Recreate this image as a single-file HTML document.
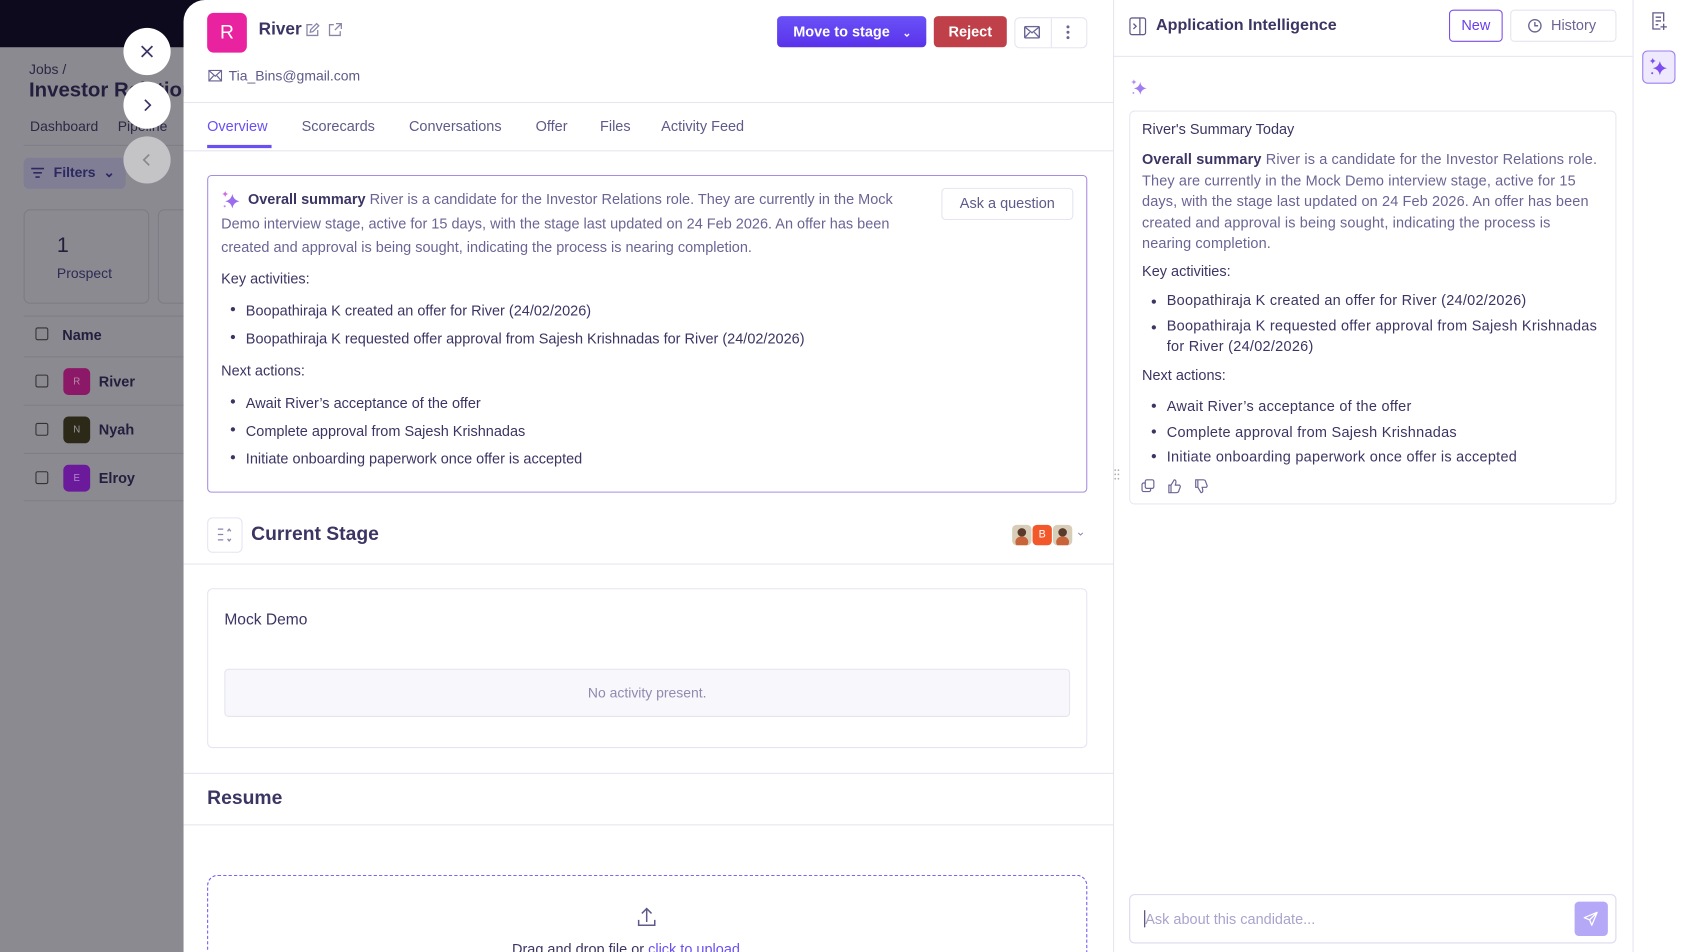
<!DOCTYPE html>
<html><head><meta charset="utf-8"><style>
*{box-sizing:border-box;margin:0;padding:0}
html,body{width:1683px;height:952px;overflow:hidden;background:#fff}
#w{position:absolute;left:0;top:0;width:1568px;height:887px;overflow:hidden;transform:scale(1.07334);transform-origin:0 0;font-family:"Liberation Sans",sans-serif;color:#3b3563}
.a{position:absolute}
.t{position:absolute;white-space:nowrap}
.hr{position:absolute;height:1px;background:#e6e4f0}
.circ{position:absolute;width:44px;height:44px;border-radius:50%;background:#fff;display:flex;align-items:center;justify-content:center}
.body{color:#6a6594;font-size:13.5px}
ul{list-style:none}
li{position:relative;padding-left:23px}
li:before{content:"";position:absolute;left:9px;top:9px;width:4px;height:4px;border-radius:50%;background:#3b3563}
.rp{letter-spacing:0.25px}
</style></head><body><div id="w">
<div class="a" style="left:0;top:0;width:200px;height:887px;background:#8b8a90"></div>
<div class="a" style="left:0;top:0;width:200px;height:44px;background:#0c0a1c"></div>
<div class="t" style="left:27px;top:57px;font-size:13px;color:#2c2845">Jobs /</div>
<div class="t" style="left:27px;top:74px;font-size:19px;font-weight:bold;color:#221e3d">Investor Relations</div>
<div class="t" style="left:28px;top:110px;font-size:13px;color:#2c2845">Dashboard &nbsp; &nbsp; Pipeline</div>
<div class="hr" style="left:22px;top:135px;width:160px;background:#7f7e86"></div>
<div class="a" style="left:22px;top:147px;width:95px;height:29px;background:#807e95;border-radius:5px"></div>
<svg class="a" style="left:29px;top:156px" width="12" height="10"><path d="M0 1H12M2 5H10M4 9H8" stroke="#2c2860" stroke-width="1.5"/></svg>
<div class="t" style="left:50px;top:153px;font-size:13px;font-weight:bold;color:#2c2860">Filters &nbsp;⌄</div>
<div class="a" style="left:22px;top:195px;width:117px;height:88px;border:1px solid #7d7c84;border-radius:6px"></div>
<div class="a" style="left:147px;top:195px;width:40px;height:88px;border:1px solid #7d7c84;border-radius:6px"></div>
<div class="t" style="left:53px;top:218px;font-size:20px;color:#221e3d">1</div>
<div class="t" style="left:53px;top:247px;font-size:13px;color:#2e2a55">Prospect</div>
<div class="hr" style="left:22px;top:294px;width:160px;background:#7f7e86"></div>
<div class="a" style="left:33px;top:305px;width:12px;height:12px;border:1.5px solid #333;border-radius:2px"></div>
<div class="t" style="left:58px;top:305px;font-size:13.5px;font-weight:bold;color:#221e3d">Name</div>
<div class="hr" style="left:22px;top:332px;width:160px;background:#7f7e86"></div>
<div class="a" style="left:33px;top:349px;width:12px;height:12px;border:1.5px solid #333;border-radius:2px"></div>
<div class="a" style="left:59px;top:343px;width:25px;height:25px;border-radius:5px;background:#8c1868;color:#b98aa8;font-size:9px;text-align:center;line-height:25px">R</div>
<div class="t" style="left:92px;top:348px;font-size:13.5px;font-weight:bold;color:#221e3d">River</div>
<div class="hr" style="left:22px;top:377px;width:160px;background:#7f7e86"></div>
<div class="a" style="left:33px;top:394px;width:12px;height:12px;border:1.5px solid #333;border-radius:2px"></div>
<div class="a" style="left:59px;top:388px;width:25px;height:25px;border-radius:5px;background:#2c2918;color:#999;font-size:9px;text-align:center;line-height:25px">N</div>
<div class="t" style="left:92px;top:393px;font-size:13.5px;font-weight:bold;color:#221e3d">Nyah</div>
<div class="hr" style="left:22px;top:422px;width:160px;background:#7f7e86"></div>
<div class="a" style="left:33px;top:439px;width:12px;height:12px;border:1.5px solid #333;border-radius:2px"></div>
<div class="a" style="left:59px;top:433px;width:25px;height:25px;border-radius:5px;background:#6a1a9a;color:#b28ad0;font-size:9px;text-align:center;line-height:25px">E</div>
<div class="t" style="left:92px;top:438px;font-size:13.5px;font-weight:bold;color:#221e3d">Elroy</div>
<div class="hr" style="left:22px;top:466px;width:160px;background:#7f7e86"></div>

<div class="circ" style="left:115px;top:26px"><svg width="14" height="14" viewBox="0 0 14 14"><path d="M2 2L12 12M12 2L2 12" stroke="#3b3563" stroke-width="1.6"/></svg></div>
<div class="circ" style="left:115px;top:76px"><svg width="14" height="14" viewBox="0 0 14 14"><path d="M5 2L10 7L5 12" stroke="#3b3563" stroke-width="1.6" fill="none"/></svg></div>
<div class="circ" style="left:115px;top:127px;background:#c4c4c6"><svg width="14" height="14" viewBox="0 0 14 14"><path d="M9 2L4 7L9 12" stroke="#888" stroke-width="1.6" fill="none"/></svg></div>

<div class="a" style="left:171px;top:0;width:1397px;height:887px;background:#fff;border-top-left-radius:20px"></div>
<div class="a" style="left:193px;top:12px;width:37px;height:37px;border-radius:6px;background:#e9239f;color:#fff;font-size:18px;text-align:center;line-height:37px">R</div>
<div class="t" style="left:241px;top:19px;font-size:16px;font-weight:bold;color:#3b3563">River</div>
<svg class="a" style="left:284px;top:21px" width="14" height="14" viewBox="0 0 14 14"><path d="M7 2H2V12H12V7M5 9L5.5 6.5L11 1L13 3L7.5 8.5Z" stroke="#8a86aa" stroke-width="1.2" fill="none"/></svg>
<svg class="a" style="left:305px;top:21px" width="14" height="14" viewBox="0 0 14 14"><path d="M6 2H2V12H12V8M8 1H13V6M13 1L7 7" stroke="#8a86aa" stroke-width="1.2" fill="none"/></svg>
<svg class="a" style="left:194px;top:65px" width="13" height="11" viewBox="0 0 13 11"><rect x="0.6" y="0.6" width="11.8" height="9.8" stroke="#6a6594" fill="none" stroke-width="1.1"/><path d="M0.6 0.6L6.5 6L12.4 0.6M0.6 10.4L5 5.5M12.4 10.4L8 5.5" stroke="#6a6594" fill="none" stroke-width="1.1"/></svg>
<div class="t" style="left:213px;top:63px;font-size:13px;color:#5e5a8a">Tia_Bins@gmail.com</div>
<div class="a" style="left:724px;top:15px;width:139px;height:29px;border-radius:4px;background:linear-gradient(#6a52f7,#5a32ea);color:#fff;font-size:13.5px;font-weight:bold;line-height:29px;padding-left:15px">Move to stage <span style="font-size:10px;margin-left:8px">⌄</span></div>
<div class="a" style="left:870px;top:15px;width:68px;height:29px;border-radius:4px;background:#c0404a;color:#fff;font-size:13.5px;font-weight:bold;line-height:29px;text-align:center">Reject</div>
<div class="a" style="left:945px;top:16px;width:68px;height:29px;border:1px solid #e6e4f0;border-radius:5px"></div>
<div class="a" style="left:979px;top:17px;width:1px;height:27px;background:#e6e4f0"></div>
<svg class="a" style="left:954px;top:24px" width="15" height="12" viewBox="0 0 15 12"><rect x="0.7" y="0.7" width="13.6" height="10.6" rx="1" stroke="#6a6594" fill="none" stroke-width="1.3"/><path d="M0.7 1L7.5 6.5L14.3 1M0.7 11L5.5 6M14.3 11L9.5 6" stroke="#6a6594" fill="none" stroke-width="1.2"/></svg>
<svg class="a" style="left:993px;top:23px" width="4" height="14"><circle cx="2" cy="2" r="1.4" fill="#6a6594"/><circle cx="2" cy="7" r="1.4" fill="#6a6594"/><circle cx="2" cy="12" r="1.4" fill="#6a6594"/></svg>
<div class="hr" style="left:171px;top:95px;width:866px"></div>
<div class="t" style="left:193px;top:110px;font-size:13.5px;color:#6a4ff2">Overview</div>
<div class="a" style="left:193px;top:135px;width:60px;height:3px;background:#6a4ff2"></div>
<div class="t" style="left:281px;top:110px;font-size:13.5px;color:#5e5a8a">Scorecards</div>
<div class="t" style="left:381px;top:110px;font-size:13.5px;color:#5e5a8a">Conversations</div>
<div class="t" style="left:499px;top:110px;font-size:13.5px;color:#5e5a8a">Offer</div>
<div class="t" style="left:559px;top:110px;font-size:13.5px;color:#5e5a8a">Files</div>
<div class="t" style="left:616px;top:110px;font-size:13.5px;color:#5e5a8a">Activity Feed</div>
<div class="hr" style="left:171px;top:140px;width:866px"></div>

<div class="a" style="left:193px;top:163px;width:820px;height:296px;border:1px solid #a78de0;border-radius:4px"></div>
<svg class="a" style="left:206px;top:177px" width="19" height="19" viewBox="0 0 20 20"><path d="M11 4Q12 10 18 11Q12 12 11 18Q10 12 4 11Q10 10 11 4Z" fill="#9a6cf0"/><path d="M4 1Q4.5 3.5 7 4Q4.5 4.5 4 7Q3.5 4.5 1 4Q3.5 3.5 4 1Z" fill="#d16be0"/><circle cx="3.5" cy="16" r="1" fill="#b58ef0"/></svg>
<div class="a body" style="left:206px;top:175px;width:650px;line-height:22.5px"><span style="display:inline-block;width:25px"></span><b style="color:#3b3563">Overall summary</b> River is a candidate for the Investor Relations role. They are currently in the Mock Demo interview stage, active for 15 days, with the stage last updated on 24 Feb 2026. An offer has been created and approval is being sought, indicating the process is nearing completion.</div>
<div class="a" style="left:877px;top:175px;width:123px;height:30px;border:1px solid #e6e4f0;border-radius:4px;font-size:13.5px;color:#5e5a8a;text-align:center;line-height:28px">Ask a question</div>
<div class="t" style="left:206px;top:252px;font-size:13.5px;color:#3b3563">Key activities:</div>
<ul class="a" style="left:206px;top:277px;font-size:13.5px;color:#3b3563;line-height:26px">
<li>Boopathiraja K created an offer for River (24/02/2026)</li>
<li>Boopathiraja K requested offer approval from Sajesh Krishnadas for River (24/02/2026)</li></ul>
<div class="t" style="left:206px;top:338px;font-size:13.5px;color:#3b3563">Next actions:</div>
<ul class="a" style="left:206px;top:363px;font-size:13.5px;color:#3b3563;line-height:26px">
<li>Await River’s acceptance of the offer</li>
<li>Complete approval from Sajesh Krishnadas</li>
<li>Initiate onboarding paperwork once offer is accepted</li></ul>

<div class="a" style="left:193px;top:482px;width:33px;height:33px;border:1px solid #e6e4f0;border-radius:5px"></div>
<svg class="a" style="left:202px;top:491px" width="15" height="15" viewBox="0 0 15 15"><path d="M1 2H6M1 7H6M1 12H6M10 4L11.5 2L13 4M10 11L11.5 13L13 11" stroke="#8a86aa" stroke-width="1.2" fill="none"/></svg>
<div class="t" style="left:234px;top:487px;font-size:18px;font-weight:bold;color:#3b3563">Current Stage</div>
<div class="a" style="left:943px;top:489px;width:18px;height:19px;border-radius:4px;background:#d8cdb8;overflow:hidden"><div class="a" style="left:5px;top:3px;width:8px;height:8px;border-radius:50%;background:#5a3a2a"></div><div class="a" style="left:3px;top:11px;width:12px;height:10px;border-radius:5px;background:#c8633a"></div></div>
<div class="a" style="left:962px;top:489px;width:18px;height:19px;border-radius:4px;background:#f2582a;color:#fff;font-size:10px;text-align:center;line-height:19px">B</div>
<div class="a" style="left:981px;top:489px;width:18px;height:19px;border-radius:4px;background:#d8cdb8;overflow:hidden"><div class="a" style="left:5px;top:3px;width:8px;height:8px;border-radius:50%;background:#5a3a2a"></div><div class="a" style="left:3px;top:11px;width:12px;height:10px;border-radius:5px;background:#c8633a"></div></div>
<div class="t" style="left:1002px;top:489px;font-size:11px;color:#8a86aa">⌄</div>
<div class="hr" style="left:171px;top:525px;width:866px"></div>
<div class="a" style="left:193px;top:548px;width:820px;height:149px;border:1px solid #e6e4f0;border-radius:5px"></div>
<div class="t" style="left:209px;top:570px;font-size:14.5px;color:#3b3563">Mock Demo</div>
<div class="a" style="left:209px;top:623px;width:788px;height:45px;border:1px solid #e6e4f0;border-radius:4px;background:#f7f7fc;font-size:13px;color:#8f8bb0;text-align:center;line-height:43px">No activity present.</div>
<div class="hr" style="left:171px;top:720px;width:866px"></div>
<div class="t" style="left:193px;top:733px;font-size:18px;font-weight:bold;color:#3b3563">Resume</div>
<div class="hr" style="left:171px;top:768px;width:866px"></div>
<div class="a" style="left:193px;top:815px;width:820px;height:100px;border:1px dashed #6a4ff2;border-radius:10px"></div>
<svg class="a" style="left:593px;top:845px" width="19" height="19" viewBox="0 0 19 19"><path d="M9.5 14V2M5 6L9.5 1.5L14 6M2 12V17H17V12" stroke="#5e5a8a" stroke-width="1.4" fill="none"/></svg>
<div class="t" style="left:477px;top:877px;font-size:13.5px;color:#3b3563">Drag and drop file or <span style="color:#6a4ff2">click to upload</span></div>

<div class="a" style="left:1037px;top:0;width:1px;height:887px;background:#e6e4f0"></div>
<svg class="a" style="left:1038px;top:436px" width="5" height="12"><circle cx="1" cy="2" r=".8" fill="#aaa"/><circle cx="4" cy="2" r=".8" fill="#aaa"/><circle cx="1" cy="6" r=".8" fill="#aaa"/><circle cx="4" cy="6" r=".8" fill="#aaa"/><circle cx="1" cy="10" r=".8" fill="#aaa"/><circle cx="4" cy="10" r=".8" fill="#aaa"/></svg>
<svg class="a" style="left:1052px;top:16px" width="16" height="17" viewBox="0 0 16 17"><rect x="0.7" y="0.7" width="14.6" height="15.6" rx="2" stroke="#5e5a8a" fill="none" stroke-width="1.2"/><path d="M10 1V16M4 6L6.5 8.5L4 11" stroke="#5e5a8a" fill="none" stroke-width="1.2"/></svg>
<div class="t" style="left:1077px;top:15px;font-size:15px;font-weight:bold;color:#3b3563">Application Intelligence</div>
<div class="a" style="left:1350px;top:9px;width:50px;height:30px;border:1.3px solid #7b4fe8;border-radius:4px;color:#6a3ee8;font-size:13.5px;text-align:center;line-height:28px">New</div>
<div class="a" style="left:1407px;top:9px;width:99px;height:30px;border:1px solid #e6e4f0;border-radius:4px;color:#6a6594;font-size:13.5px;line-height:28px;padding-left:37px">History</div>
<svg class="a" style="left:1423px;top:17px" width="14" height="14" viewBox="0 0 14 14"><circle cx="7" cy="7" r="5.7" stroke="#6a6594" fill="none" stroke-width="1.3"/><path d="M7 3.5V7H10" stroke="#6a6594" fill="none" stroke-width="1.3"/></svg>
<div class="hr" style="left:1037px;top:52px;width:484px"></div>
<svg class="a" style="left:1053px;top:73px" width="17" height="17" viewBox="0 0 20 20"><path d="M11 4Q12 10 18 11Q12 12 11 18Q10 12 4 11Q10 10 11 4Z" fill="#a17ef0"/><path d="M4 1Q4.5 3.5 7 4Q4.5 4.5 4 7Q3.5 4.5 1 4Q3.5 3.5 4 1Z" fill="#b58ef0"/><circle cx="3.5" cy="16" r="1" fill="#b58ef0"/></svg>
<div class="a" style="left:1052px;top:103px;width:454px;height:367px;border:1px solid #e9e7f2;border-radius:5px"></div>
<div class="t" style="left:1064px;top:113px;font-size:13.5px;color:#3b3563">River's Summary Today</div>
<div class="a body" style="left:1064px;top:139px;width:430px;line-height:19.6px;letter-spacing:0.12px"><b style="color:#3b3563">Overall summary</b> River is a candidate for the Investor Relations role. They are currently in the Mock Demo interview stage, active for 15 days, with the stage last updated on 24 Feb 2026. An offer has been created and approval is being sought, indicating the process is nearing completion.</div>
<div class="t" style="left:1064px;top:245px;font-size:13.5px;color:#3b3563">Key activities:</div>
<ul class="a rp" style="left:1064px;top:270px;width:428px;font-size:13.5px;color:#3b3563;line-height:19.6px">
<li style="margin-bottom:4px">Boopathiraja K created an offer for River (24/02/2026)</li>
<li>Boopathiraja K requested offer approval from Sajesh Krishnadas for River (24/02/2026)</li></ul>
<div class="t" style="left:1064px;top:342px;font-size:13.5px;color:#3b3563">Next actions:</div>
<ul class="a rp" style="left:1064px;top:367px;font-size:13.5px;color:#3b3563;line-height:23.5px">
<li>Await River’s acceptance of the offer</li>
<li>Complete approval from Sajesh Krishnadas</li>
<li>Initiate onboarding paperwork once offer is accepted</li></ul>
<svg class="a" style="left:1063px;top:446px" width="70" height="14" viewBox="0 0 70 14"><rect x="1" y="4" width="8" height="8" rx="1.5" stroke="#6a6594" fill="none" stroke-width="1.1"/><rect x="4" y="1" width="8" height="8" rx="1.5" stroke="#6a6594" fill="#fff" stroke-width="1.1"/><path d="M26 6V13H28V6ZM28 6L31 1Q33 1 32.5 4L32 6H36Q37 7 36.5 8L35 12Q34.5 13 33 13H28" stroke="#6a6594" fill="none" stroke-width="1.1"/><path d="M51 8V1H53V8ZM53 8L56 13Q58 13 57.5 10L57 8H61Q62 7 61.5 6L60 2Q59.5 1 58 1H53" stroke="#6a6594" fill="none" stroke-width="1.1"/></svg>
<div class="a" style="left:1052px;top:833px;width:454px;height:46px;border:1px solid #dcd8ec;border-radius:5px"></div>
<div class="a" style="left:1066px;top:848px;width:1px;height:16px;background:#3b3563"></div>
<div class="t" style="left:1067px;top:849px;font-size:13.5px;color:#a9a4cc">Ask about this candidate...</div>
<div class="a" style="left:1467px;top:840px;width:31px;height:32px;border-radius:4px;background:#b5a9f7"></div>
<svg class="a" style="left:1475px;top:849px" width="14" height="14" viewBox="0 0 14 14"><path d="M13 1L1 6L6 8L8 13ZM13 1L6 8" stroke="#fff" stroke-width="1.2" fill="none" stroke-linejoin="round"/></svg>

<div class="a" style="left:1521px;top:0;width:1px;height:887px;background:#e6e4f0"></div>
<svg class="a" style="left:1538px;top:11px" width="16" height="18" viewBox="0 0 16 18"><path d="M9 16H2V1H12V9M4.5 5H9.5M4.5 8.5H9.5M4.5 12H7M12 11V17M9 14H15" stroke="#5e5a8a" stroke-width="1.2" fill="none"/></svg>
<div class="a" style="left:1530px;top:47px;width:31px;height:31px;border:1px solid #9b7df0;border-radius:5px;background:#efe9fd"></div>
<svg class="a" style="left:1536px;top:53px" width="19" height="19" viewBox="0 0 20 20"><path d="M11 4Q12 10 18 11Q12 12 11 18Q10 12 4 11Q10 10 11 4Z" fill="#7e4ff0"/><path d="M4 1Q4.5 3.5 7 4Q4.5 4.5 4 7Q3.5 4.5 1 4Q3.5 3.5 4 1Z" fill="#7e4ff0"/><circle cx="3.5" cy="16" r="1" fill="#7e4ff0"/></svg>
</div></body></html>
